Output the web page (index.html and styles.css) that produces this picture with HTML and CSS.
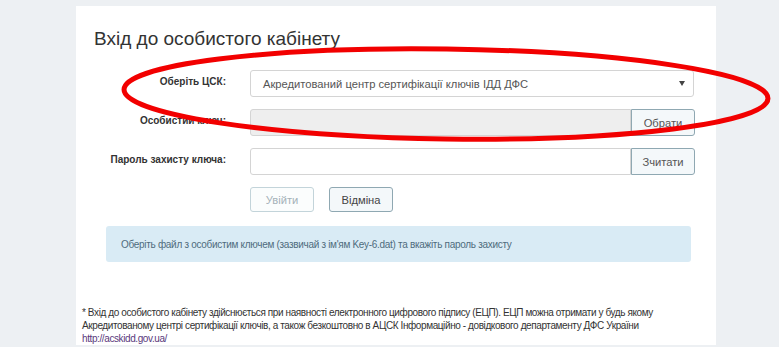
FILE: index.html
```html
<!DOCTYPE html>
<html lang="uk">
<head>
  <meta charset="UTF-8">
  <title>Вхід до особистого кабінету</title>
  <link rel="stylesheet" href="styles.css">
</head>
<body>

  <div class="panel">
    <h2>Вхід до особистого кабінету</h2>

    <form id="loginForm">
      <div class="row">
        <label>Оберіть ЦСК:</label>
        <div class="select">
          <span>Акредитований центр сертифікації ключів ІДД ДФС</span>
          <i class="arrow"></i>
        </div>
      </div>

      <div class="row">
        <label>Особистий ключ:</label>
        <input type="text" class="field grey" readonly>
        <button type="button" class="btn side">Обрати</button>
      </div>

      <div class="row">
        <label>Пароль захисту ключа:</label>
        <input type="password" class="field">
        <button type="button" class="btn side">Зчитати</button>
      </div>

      <div class="actions">
        <button type="submit" class="btn" disabled>Увійти</button>
        <button type="button" class="btn">Відміна</button>
      </div>
    </form>

    <div class="alert">
      Оберіть файл з особистим ключем (зазвичай з ім'ям Key-6.dat) та вкажіть пароль захисту
    </div>

    <p class="note">
      * Вхід до особистого кабінету здійснюється при наявності електронного цифрового підпису (ЕЦП). ЕЦП можна отримати у будь якому<br>
      Акредитованому центрі сертифікації ключів, а також безкоштовно в АЦСК Інформаційно - довідкового департаменту ДФС України<br>
      <a href="http://acskidd.gov.ua/">http://acskidd.gov.ua/</a>
    </p>
  </div>

  <!-- red marker drawn over the screenshot -->
  <svg class="mark" width="779" height="347" viewBox="0 0 779 347">
    <ellipse cx="446" cy="94" rx="322" ry="45" transform="rotate(0.8 446 94)"
             fill="none" stroke="#f20000" stroke-width="5"/>
  </svg>

</body>
</html>
```

FILE: styles.css
```css
body {
  margin: 0;
  background: #edf0f3;
  font-family: "Liberation Sans", Arial, sans-serif;
  color: #333;
}

.panel {
  position: relative;
  width: 640px;
  height: 339px;
  margin: 6px 0 0 76px;
  padding-top: 21px;
  box-sizing: border-box;
  background: white;
}

.panel h2 {
  margin: 0 0 19px 18px;
  font-size: 19px;
  font-weight: normal;
  line-height: 24px;
  color: #333;
}

.row {
  display: flex;
  align-items: flex-start;
  margin-bottom: 12px;
}

.row label {
  width: 150px;
  margin-right: 24px;
  padding-top: 5px;
  text-align: right;
  font-size: 10px;
  font-weight: bold;
  line-height: 13px;
  color: #333;
}

.select {
  display: flex;
  align-items: center;
  justify-content: space-between;
  width: 444px;
  height: 27px;
  padding: 0 8px 0 12px;
  box-sizing: border-box;
  border: 1px solid #d4d4d4;
  border-radius: 3px;
  font-size: 11.2px;
  color: #555;
}

.arrow {
  width: 0;
  height: 0;
  border-left: 3px solid transparent;
  border-right: 3px solid transparent;
  border-top: 5px solid #444;
}

.field {
  width: 381px;
  height: 27px;
  margin: 0;
  padding: 0 10px;
  box-sizing: border-box;
  border: 1px solid #d4d4d4;
  border-radius: 3px 0 0 3px;
  font-size: 12px;
}

.field.grey {
  background: #eee;
}

.btn {
  height: 25px;
  padding: 0 11px;
  border: 1px solid #8fa8b2;
  border-radius: 3px;
  background: #f4f8fa;
  font-family: "Liberation Sans", Arial, sans-serif;
  font-size: 11.2px;
  color: #444;
  cursor: pointer;
}

.btn.side {
  width: 64px;
  height: 27px;
  padding: 0;
  border-radius: 0 3px 3px 0;
  color: #555;
}

.btn:disabled {
  border-color: #c3d4da;
  background: #fbfdfd;
  color: #a5b2b9;
  cursor: default;
}

.actions {
  display: flex;
  gap: 15px;
  margin: 1px 0 14px 174px;
}

.actions .btn {
  width: 64px;
}

.alert {
  width: 585px;
  height: 36px;
  margin-left: 30px;
  padding: 0 15px;
  box-sizing: border-box;
  display: flex;
  align-items: center;
  border-radius: 3px;
  background: #d9ebf5;
  font-size: 10px;
  letter-spacing: -0.3px;
  color: #4f6b7d;
}

.note {
  position: absolute;
  left: 6px;
  right: 0;
  bottom: 0;
  margin: 0;
  font-size: 10px;
  letter-spacing: -0.4px;
  line-height: 13px;
  color: #333;
}

.note a {
  color: #5b3a7c;
  text-decoration: none;
}

.mark {
  position: absolute;
  left: 0;
  top: 0;
  pointer-events: none;
}
```
